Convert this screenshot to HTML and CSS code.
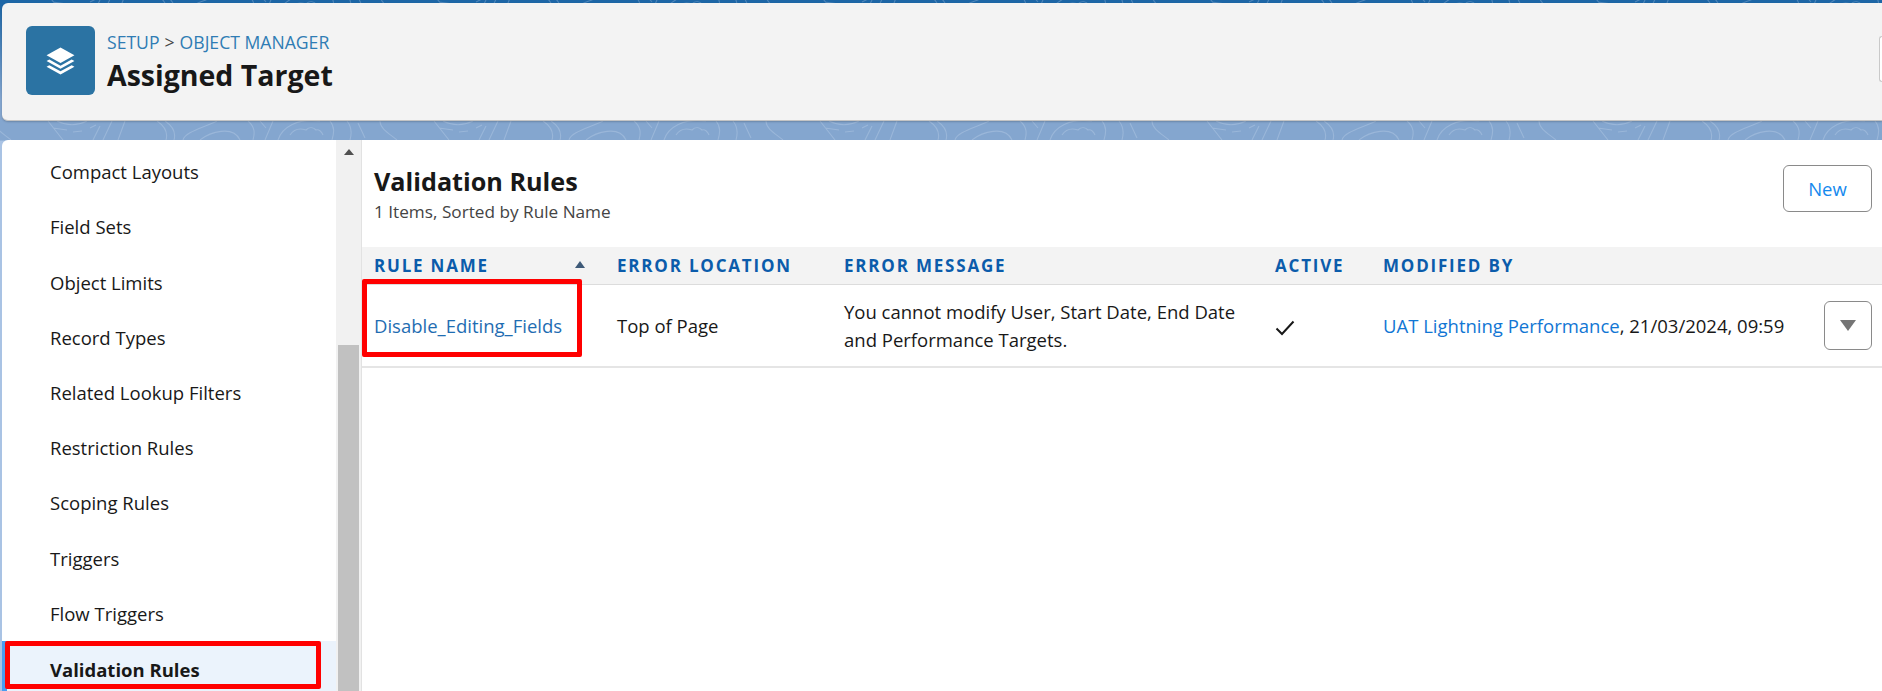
FILE: index.html
```html
<!DOCTYPE html>
<html lang="en">
<head>
<meta charset="utf-8">
<title>Validation Rules</title>
<link rel="stylesheet" href="styles.css">
</head>
<body>
<svg class="pattern" width="1882" height="140" viewBox="0 0 1882 140" fill="none">
  <defs>
    <g id="tile" stroke="#a9c2e0" stroke-width="1.100">
      <path d="M0 121 15 140M5 128l14 2M25 132l9-1M42 128l6-3M9 121c10 5 20 5 30 0"/>
      <path d="M45 140l7-14M55 140l9-19M70 140l7-19"/>
      <path d="M109 121c9 6 11 12 9 19M117 121c9 6 11 12 9 19"/>
      <path d="M135 140c2-8 20-12 34-19M152 140c10-8 33-15 40 0"/>
      <path d="M200 121c7 6 7 12 5 19M225 121l-8 19M212 121l6 7"/>
      <path d="M230 140c4-13 20-22 42-19M242 135c4-6 10-7 16-5 4-4 8-2 10 0 3-1 6 2 7 5"/>
      <path d="M282 121c5 6 4 12 2 19M299 121c5 6 5 12 3 19M310 123l7 15" />
      <path d="M332 121c0 8 10 13 17 19"/>
    </g>
  </defs>
  <g class="pattern-band">
    <use href="#tile" x="-338"/>
    <use href="#tile" x="48"/>
    <use href="#tile" x="434"/>
    <use href="#tile" x="820"/>
    <use href="#tile" x="1207"/>
    <use href="#tile" x="1593"/>
  </g>
  <g class="pattern-top">
    <use href="#tile" x="48" y="-126"/>
    <use href="#tile" x="434" y="-126"/>
    <use href="#tile" x="820" y="-126"/>
    <use href="#tile" x="1207" y="-126"/>
    <use href="#tile" x="1593" y="-126"/>
  </g>
</svg>
<header class="page-header">
  <div class="object-icon">
    <svg width="31" height="31" viewBox="0 0 30 30" fill="#fff">
      <path d="M15 2.5 28.5 10 15 17.5 1.5 10z"/>
      <path d="M4.2 14 15 20 25.8 14 28.5 15.6 15 23 1.5 15.6z"/>
      <path d="M4.2 19.5 15 25.5 25.8 19.500 28.500 21 15 28.500 1.500 21z"/>
    </svg>
  </div>
  <div class="titles">
    <div class="crumbs"><a class="crumb">SETUP</a><span class="crumb-sep">&gt;</span><a class="crumb">OBJECT MANAGER</a></div>
    <h1 class="object-name">Assigned Target</h1>
  </div>
  <div class="edge-button"></div>
</header>
<div class="panel">
  <nav class="sidebar">
    <div class="nav-list">
      <a class="nav-item">Compact Layouts</a>
      <a class="nav-item">Field Sets</a>
      <a class="nav-item">Object Limits</a>
      <a class="nav-item">Record Types</a>
      <a class="nav-item">Related Lookup Filters</a>
      <a class="nav-item">Restriction Rules</a>
      <a class="nav-item">Scoping Rules</a>
      <a class="nav-item">Triggers</a>
      <a class="nav-item">Flow Triggers</a>
      <a class="nav-item nav-item-active">Validation Rules<span class="mark mark-nav"></span></a>
    </div>
    <div class="scrollbar">
      <span class="scroll-arrow"></span>
      <span class="scroll-thumb"></span>
    </div>
  </nav>
  <main class="content">
    <div class="content-head">
      <div>
        <h2 class="content-title">Validation Rules</h2>
        <p class="content-sub">1 Items, Sorted by Rule Name</p>
      </div>
      <button class="btn-new">New</button>
    </div>
    <div class="grid-row grid-head">
      <div class="th th-sorted">RULE NAME<span class="sort-arrow"></span></div>
      <div class="th">ERROR LOCATION</div>
      <div class="th">ERROR MESSAGE</div>
      <div class="th">ACTIVE</div>
      <div class="th">MODIFIED BY</div>
    </div>
    <div class="grid-row grid-body">
      <div class="td"><a class="link">Disable_Editing_Fields</a></div>
      <div class="td">Top of Page</div>
      <div class="td td-message">You cannot modify User, Start Date, End Date and Performance Targets.</div>
      <div class="td">
        <svg class="check" width="20" height="16" viewBox="0 0 20 16" fill="none"><path d="M1.500 8.500 7 14 18.500 1.500" stroke="#181818" stroke-width="2"/></svg>
      </div>
      <div class="td td-modified"><span><a class="link-bright">UAT Lightning Performance</a>, 21/03/2024, 09:59</span><button class="btn-menu"><span class="menu-arrow"></span></button></div>
      <span class="mark mark-row"></span>
    </div>
  </main>
</div>
</body>
</html>
```
FILE: styles.css
```css
* { box-sizing: border-box; }
html, body { margin: 0; height: 691px; overflow: hidden; }
body {
  position: relative;
  width: 1882px;
  font-family: "Open Sans", "Noto Sans", sans-serif;
  font-size: 18.500px;
  color: #181818;
  background: linear-gradient(180deg, #1d66a6 0, #1d66a6 4px, #84a6cf 100px, #84a6cf 140px, #a9c3e4 141px);
}
a { text-decoration: none; }
h1, h2, p { margin: 0; }

.pattern { position: absolute; left: 0; top: 0; }
.pattern-band { opacity: .6; }
.pattern-top { opacity: .35; }

.page-header {
  position: relative;
  height: 118px;
  margin: 3px 0 0 2px;
  padding-left: 24px;
  display: flex;
  align-items: center;
  gap: 12px;
  background: #f3f3f3;
  border-bottom: 1px solid #c4c4c4;
  border-radius: 6px 0 0 6px;
  box-shadow: 0 1px 2px rgba(0,0,0,.2);
}
.object-icon {
  width: 69px;
  height: 69px;
  margin-top: -2px;
  border-radius: 6px;
  background: #2b73a3;
  display: flex;
  align-items: center;
  justify-content: center;
}
.titles { display: flex; flex-direction: column; gap: 2px; }
.crumbs { display: flex; gap: 5px; font-size: 17.600px; line-height: 24px; }
.crumb { color: #2f7cb4; }
.crumb-sep { color: #444; }
.object-name { font-size: 28.500px; line-height: 38px; font-weight: 700; color: #181818; }
.edge-button {
  position: absolute;
  right: 0;
  top: 33px;
  width: 3px;
  height: 46px;
  background: #fff;
  border: 1px solid #c9c9c9;
  border-right: 0;
  border-radius: 4px 0 0 4px;
}

.panel {
  position: relative;
  display: flex;
  height: 551px;
  margin: 19px 0 0 2px;
  background: #fff;
  border-radius: 6px 0 0 0;
}
.sidebar { display: flex; width: 360px; flex: none; border-right: 1px solid #e2e2e2; }
.nav-list { width: 334px; flex: none; display: flex; flex-direction: column; }
.nav-item {
  position: relative;
  flex: none;
  height: 55.200px;
  padding-left: 48px;
  display: flex;
  align-items: center;
  color: #181818;
}
.nav-item:first-child { height: 59.400px; padding-top: 3px; }
.nav-item-active {
  height: 52px;
  padding-top: 5px;
  font-weight: 700;
  background: #ebf3fc;
  border-left: 5px solid #4a9cf0;
  padding-left: 43px;
}
.mark { position: absolute; border: 5px solid #f00; border-radius: 2px; pointer-events: none; }
.mark-nav { left: -2px; top: 0; width: 316px; height: 48px; }

.scrollbar { position: relative; width: 25px; flex: none; background: #f1f1f1; display: flex; flex-direction: column; align-items: center; }
.scroll-arrow {
  margin-top: 9px;
  border-left: 5.500px solid transparent;
  border-right: 5.500px solid transparent;
  border-bottom: 6px solid #505050;
}
.scroll-thumb { position: absolute; left: 2px; top: 205px; width: 21px; bottom: 0; background: #c1c1c1; }

.content { flex: 1; min-width: 0; }
.content-head {
  height: 107px;
  padding: 25px 10px 0 12px;
  display: flex;
  justify-content: space-between;
  align-items: flex-start;
}
.content-title { font-size: 25.200px; line-height: 32px; font-weight: 700; }
.content-sub { font-size: 17.200px; line-height: 22px; color: #444; margin-top: 4px; }
.btn-new {
  width: 89px;
  height: 47px;
  background: #fff;
  border: 1px solid #8a8a8a;
  border-radius: 6px;
  color: #1589ee;
  font: 400 18.500px "Open Sans", sans-serif;
}

.grid-row {
  position: relative;
  display: grid;
  grid-template-columns: 243px 227px 431px 108px 1fr;
  padding-left: 12px;
}
.grid-head { height: 38px; background: #f3f3f3; border-bottom: 1px solid #dcdcdc; align-items: center; }
.th { position: relative; font-size: 17px; font-weight: 700; color: #0b5cab; letter-spacing: 1.800px; }
.th-sorted { display: block; }
.sort-arrow {
  position: absolute;
  left: 201px;
  top: 7px;
  border-left: 5.500px solid transparent;
  border-right: 5.500px solid transparent;
  border-bottom: 7px solid #3e5a78;
}
.grid-body { height: 83px; align-items: center; border-bottom: 2px solid #e5e5e5; }
.td { line-height: 28px; }
.td-message { width: 400px; }
.check { display: block; margin-top: 5px; }
.link { color: #1f6db2; }
.link-bright { color: #1176d4; }
.td-modified { display: flex; align-items: center; justify-content: space-between; padding-right: 10px; }
.btn-menu {
  width: 48px;
  height: 49px;
  padding: 0;
  background: #fff;
  border: 1px solid #8a8a8a;
  border-radius: 6px;
  display: flex;
  align-items: center;
  justify-content: center;
}
.menu-arrow {
  border-left: 8px solid transparent;
  border-right: 8px solid transparent;
  border-top: 11px solid #757575;
}
.mark-row { left: 0; top: -6px; width: 220px; height: 78px; }
```
